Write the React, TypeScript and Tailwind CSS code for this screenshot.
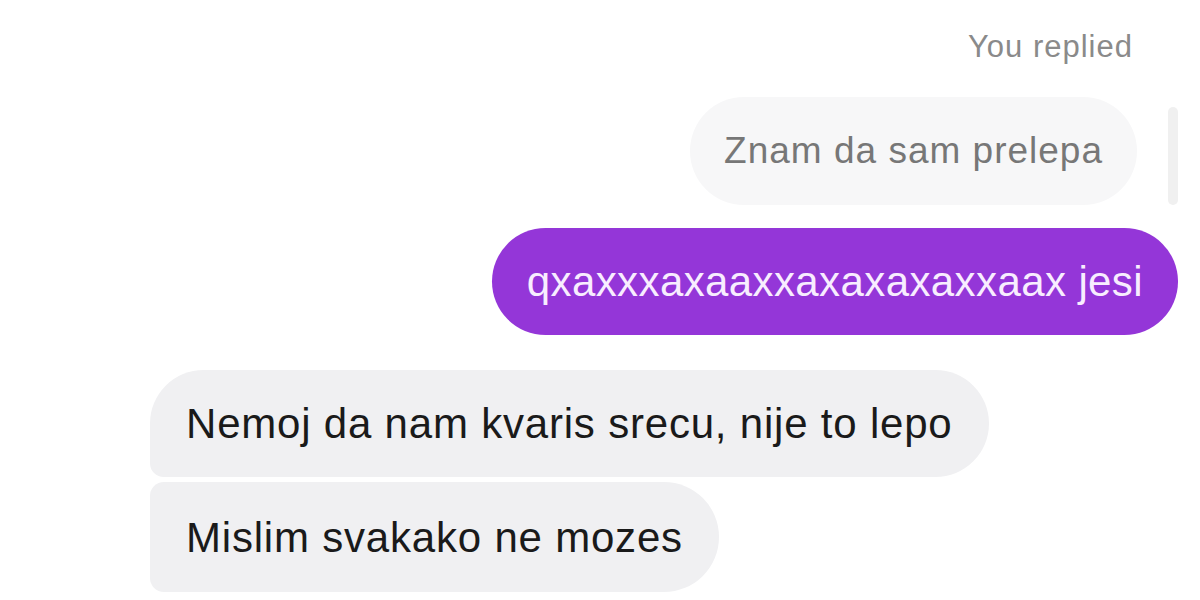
import React from "react";

const font = { fontFamily: '"Liberation Sans", Arial, sans-serif' };

function LeftBubble({ text, shape }: { text: string; shape: string }) {
  return (
    <div className="flex pl-[150px]">
      <div
        className={`flex items-center px-[36px] bg-[#f0f0f2] text-[#1a1a1a] text-[42px] tracking-[0.8px] ${shape}`}
      >
        {text}
      </div>
    </div>
  );
}

export default function App() {
  return (
    <div
      className="w-[1200px] h-[600px] overflow-hidden bg-white flex flex-col"
      style={font}
    >
      {/* reply header */}
      <div className="flex justify-end pr-[67px] pt-[29px]">
        <span className="text-[31px] leading-[36px] tracking-[1px] text-[#8a8a8a]">
          You replied
        </span>
      </div>

      {/* quoted message + reply bar */}
      <div className="flex justify-end items-stretch gap-[31px] pr-[22px] mt-[32px]">
        <div className="h-[108px] flex items-center px-[34px] rounded-full bg-[#f7f7f8] text-[#777777] text-[37px] tracking-[1px]">
          Znam da sam prelepa
        </div>
        <div className="w-[10px] mt-[10px] rounded-full bg-[#f0f0f0]" />
      </div>

      {/* my message */}
      <div className="flex justify-end pr-[22px] mt-[23px]">
        <div className="h-[107px] flex items-center px-[35px] rounded-full bg-[#9436d8] text-[#f8edff] text-[42px] tracking-[0.4px]">
          qxaxxxaxaaxxaxaxaxaxxaax jesi
        </div>
      </div>

      {/* their messages */}
      <div className="flex flex-col gap-[5px] mt-[35px]">
        <LeftBubble
          text="Nemoj da nam kvaris srecu, nije to lepo"
          shape="h-[107px] rounded-tl-[54px] rounded-tr-[54px] rounded-br-[54px] rounded-bl-[14px]"
        />
        <LeftBubble
          text="Mislim svakako ne mozes"
          shape="h-[110px] rounded-tl-[14px] rounded-tr-[55px] rounded-br-[55px] rounded-bl-[14px]"
        />
      </div>
    </div>
  );
}
